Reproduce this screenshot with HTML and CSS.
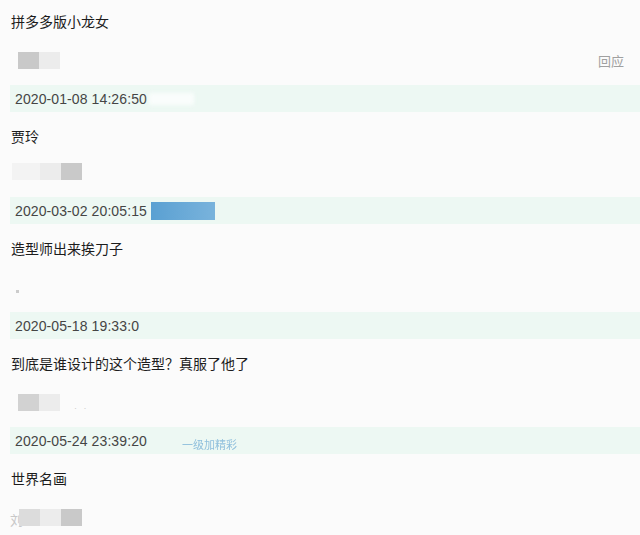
FILE: index.html
```html
<!DOCTYPE html>
<html lang="zh">
<head>
<meta charset="utf-8">
<link rel="stylesheet" href="styles.css">
</head>
<body>
<div class="list">
  <div class="item">
    <div class="title">拼多多版小龙女</div>
    <div class="meta">
      <div class="user"><span class="blk dark"></span><span class="blk light"></span></div>
      <div class="reply">回应</div>
    </div>
    <div class="band"><span class="date">2020-01-08 14:26:50</span><span class="smudge"></span></div>
  </div>
  <div class="item">
    <div class="title">贾玲</div>
    <div class="meta meta2">
      <div class="user"><span class="blk faint wide"></span><span class="blk light"></span><span class="blk dark"></span></div>
    </div>
    <div class="band"><span class="date">2020-03-02 20:05:15</span><span class="bluebox"></span></div>
  </div>
  <div class="item">
    <div class="title">造型师出来挨刀子</div>
    <div class="meta">
      <div class="user"><span class="dot"></span></div>
    </div>
    <div class="band"><span class="date">2020-05-18 19:33:0</span></div>
  </div>
  <div class="item">
    <div class="title">到底是谁设计的这个造型？真服了他了</div>
    <div class="meta">
      <div class="user"><span class="blk dark soft"></span><span class="blk light"></span><span class="dots">· ·</span></div>
    </div>
    <div class="band"><span class="date">2020-05-24 23:39:20</span><span class="bluetext">一级加精彩</span></div>
  </div>
  <div class="item">
    <div class="title">世界名画</div>
    <div class="meta meta5">
      <div class="user"><span class="ghost">刘</span><span class="blk mid overlap"></span><span class="blk light"></span><span class="blk dark"></span></div>
    </div>
  </div>
</div>
</body>
</html>
```
FILE: styles.css
```css
html, body {
  margin: 0;
  padding: 0;
  background: #fbfbfb;
  font-family: "Liberation Sans", "Noto Sans CJK SC", sans-serif;
}
.list {
  display: flex;
  flex-direction: column;
}
.item {
  display: flex;
  flex-direction: column;
  padding: 11px 0 3px 0;
}
.title {
  padding-left: 11px;
  font-size: 14px;
  line-height: 20px;
  height: 20px;
  color: #1c1c1c;
  font-family: "Noto Sans CJK SC", sans-serif;
}
.meta {
  margin-top: 21px;
  height: 17px;
  display: flex;
  justify-content: space-between;
  align-items: center;
  padding-left: 18px;
  padding-right: 16px;
}
.meta2 {
  margin-top: 16px;
  height: 19px;
  padding-left: 12px;
}
.meta5 {
  padding-left: 10px;
}
.user {
  display: flex;
  align-items: center;
  height: 100%;
}
.blk {
  display: block;
  width: 21px;
  height: 17px;
  filter: blur(0.6px);
}
.dark { background: #c9c9c9; }
.soft { background: #d2d2d2; }
.mid { background: #dcdcdc; }
.light { background: #ececec; }
.faint { background: #f3f3f3; }
.wide { width: 28px; }
.overlap { margin-left: -4px; }
.dot {
  width: 3px;
  height: 3px;
  background: #ccc;
  margin-left: -2px;
  margin-top: 8px;
}
.dots {
  font-size: 9px;
  color: #ccc;
  margin-left: 14px;
  margin-top: 10px;
  letter-spacing: 2px;
}
.ghost {
  font-family: "Noto Sans CJK SC", sans-serif;
  font-size: 13px;
  line-height: 17px;
  color: #c8c8c8;
  margin-top: 4px;
}
.reply {
  font-family: "Noto Sans CJK SC", sans-serif;
  font-size: 13px;
  color: #a0a0a0;
  line-height: 17px;
}
.band {
  margin-top: 16px;
  margin-left: 10px;
  height: 27px;
  background: #edf8f3;
  display: flex;
  align-items: center;
  padding-left: 5px;
}
.date {
  font-size: 14px;
  color: #454545;
  letter-spacing: 0.1px;
}
.smudge {
  width: 45px;
  height: 12px;
  background: #fafdfc;
  filter: blur(2px);
  margin-left: 2px;
}
.bluebox {
  width: 64px;
  height: 18px;
  margin-left: 4px;
  background: linear-gradient(90deg, #5aa0d2, #79b3dc);
  filter: blur(0.5px);
}
.bluetext {
  font-family: "Noto Sans CJK SC", sans-serif;
  font-size: 11px;
  color: #8fbfdc;
  margin-left: 35px;
  margin-top: 6px;
  filter: blur(0.7px);
}
```
